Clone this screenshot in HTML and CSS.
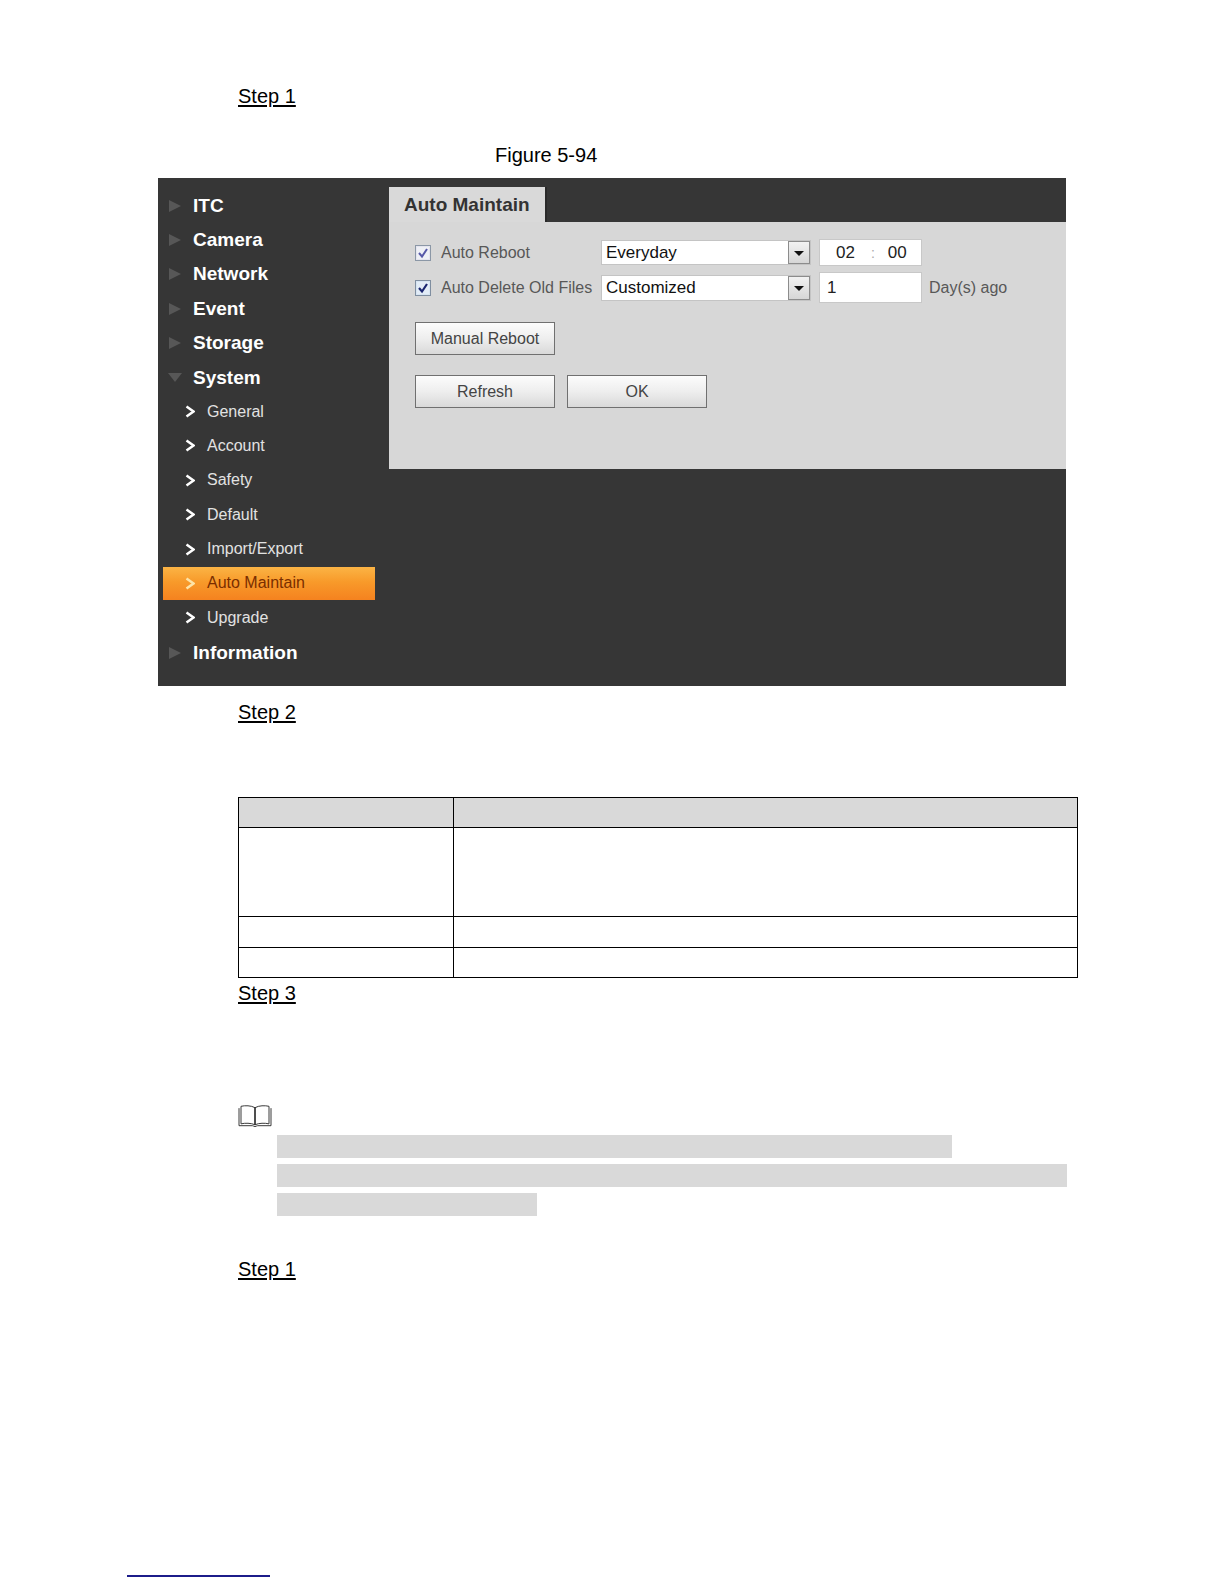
FILE: index.html
```html
<!DOCTYPE html>
<html>
<head>
<meta charset="utf-8">
<link rel="stylesheet" href="styles.css">
</head>
<body>
<div class="page">
  <p class="step">Step 1</p>
  <p class="caption">Figure 5-94</p>

  <div class="figure">
    <ul class="sidebar">
      <li class="top"><span class="tri"></span>ITC</li>
      <li class="top"><span class="tri"></span>Camera</li>
      <li class="top"><span class="tri"></span>Network</li>
      <li class="top"><span class="tri"></span>Event</li>
      <li class="top"><span class="tri"></span>Storage</li>
      <li class="top"><span class="tri down"></span>System</li>
      <li class="sub"><svg class="chev" viewBox="0 0 10 13"><polyline points="1.5,1.5 8.5,6.5 1.5,11.5"/></svg>General</li>
      <li class="sub"><svg class="chev" viewBox="0 0 10 13"><polyline points="1.5,1.5 8.5,6.5 1.5,11.5"/></svg>Account</li>
      <li class="sub"><svg class="chev" viewBox="0 0 10 13"><polyline points="1.5,1.5 8.5,6.5 1.5,11.5"/></svg>Safety</li>
      <li class="sub"><svg class="chev" viewBox="0 0 10 13"><polyline points="1.5,1.5 8.5,6.5 1.5,11.5"/></svg>Default</li>
      <li class="sub"><svg class="chev" viewBox="0 0 10 13"><polyline points="1.5,1.5 8.5,6.5 1.5,11.5"/></svg>Import/Export</li>
      <li class="sub active"><svg class="chev" viewBox="0 0 10 13"><polyline points="1.5,1.5 8.5,6.5 1.5,11.5"/></svg>Auto Maintain</li>
      <li class="sub"><svg class="chev" viewBox="0 0 10 13"><polyline points="1.5,1.5 8.5,6.5 1.5,11.5"/></svg>Upgrade</li>
      <li class="top"><span class="tri"></span>Information</li>
    </ul>

    <div class="main">
      <div class="tabbar"><div class="tab">Auto Maintain</div></div>
      <div class="panel">
        <div class="row row1">
          <svg class="cb" viewBox="0 0 16 16"><rect x="0.5" y="0.5" width="15" height="15" fill="#e4e4ee" stroke="#8b97a6"/><rect x="2" y="2" width="12" height="12" fill="#eef0f6"/><polyline points="4,8 7,11.5 12,4" fill="none" stroke="#5658a8" stroke-width="2"/></svg>
          <span class="label">Auto Reboot</span>
          <div class="select"><span class="val">Everyday</span><span class="arrow"></span></div>
          <div class="timebox"><span>02</span><span class="colon">:</span><span>00</span></div>
        </div>
        <div class="row row2">
          <svg class="cb" viewBox="0 0 16 16"><rect x="0.5" y="0.5" width="15" height="15" fill="#d6e4f2" stroke="#7f8ea0"/><rect x="2" y="2" width="12" height="12" fill="#e2ecf7"/><polyline points="4,8 7,11.5 12,4" fill="none" stroke="#1a2670" stroke-width="2.2"/></svg>
          <span class="label">Auto Delete Old Files</span>
          <div class="select"><span class="val">Customized</span><span class="arrow"></span></div>
          <div class="inputbox">1</div>
          <span class="unit">Day(s) ago</span>
        </div>
        <div class="btnrow first"><button class="btn">Manual Reboot</button></div>
        <div class="btnrow"><button class="btn">Refresh</button><button class="btn">OK</button></div>
      </div>
    </div>
  </div>

  <p class="step step2">Step 2</p>

  <table class="params">
    <tr class="head"><td class="c1"></td><td></td></tr>
    <tr class="tall"><td class="c1"></td><td></td></tr>
    <tr class="r3"><td class="c1"></td><td></td></tr>
    <tr class="r4"><td class="c1"></td><td></td></tr>
  </table>

  <p class="step step3">Step 3</p>

  <div class="note">
    <svg class="book" viewBox="0 0 34 26" preserveAspectRatio="none">
      <path d="M17 4 C13 1.5 7 1.5 3 2.5 V21.5 C7 20.5 13 20.5 17 22.5 Z" fill="none" stroke="#333" stroke-width="1"/>
      <path d="M17 4 C21 1.5 27 1.5 31 2.5 V21.5 C27 20.5 21 20.5 17 22.5 Z" fill="none" stroke="#333" stroke-width="1"/>
      <path d="M1 4.5 V23.5 H14.5 C15.5 23.5 16 24.5 17 24.5 C18 24.5 18.5 23.5 19.5 23.5 H33 V4.5" fill="none" stroke="#333" stroke-width="1"/>
      <path d="M17 4 V22.5" stroke="#333" stroke-width="1"/>
    </svg>
    <div class="bar b1"></div>
    <div class="bar b2"></div>
    <div class="bar b3"></div>
  </div>

  <p class="step step4">Step 1</p>

  <div class="footline"></div>
</div>
</body>
</html>
```
FILE: styles.css
```css
* { box-sizing: border-box; }

html, body {
  overflow: hidden;
}

body {
  margin: 0;
  background: #fff;
  font-family: "Liberation Sans", Arial, sans-serif;
  color: #000;
}

.page {
  width: 1224px;
  height: 1584px;
  overflow: hidden;
  padding-top: 84px;
}

.step {
  margin: 0 0 0 238px;
  font-size: 20px;
  line-height: 24px;
  text-decoration: underline;
  text-underline-offset: 2px;
}

.caption {
  margin: 35px 0 0 495px;
  font-size: 20px;
  line-height: 24px;
}

/* ---------- figure ---------- */
.figure {
  margin: 11px 0 0 158px;
  width: 908px;
  height: 508px;
  background: #363636;
  display: flex;
}

.sidebar {
  list-style: none;
  margin: 0;
  padding: 10px 0 0 0;
  width: 231px;
  flex: none;
}

.sidebar li {
  height: 34.4px;
  display: flex;
  align-items: center;
}

.top {
  padding-left: 11px;
  color: #fff;
  font-weight: bold;
  font-size: 19px;
  padding-top: 1px;
}

.tri {
  width: 0;
  height: 0;
  border-top: 6.5px solid transparent;
  border-bottom: 6.5px solid transparent;
  border-left: 12px solid #575757;
  margin-right: 12px;
}

.tri.down {
  border-left: 7px solid transparent;
  border-right: 7px solid transparent;
  border-top: 9px solid #575757;
  border-bottom: 0;
  margin-left: -1px;
  margin-right: 11px;
}

.sub {
  margin-left: 5px;
  width: 212px;
  padding-left: 22px;
  color: #e2e2e2;
  font-size: 16px;
}

.chev {
  width: 10px;
  height: 13px;
  margin-right: 12px;
  fill: none;
  stroke: #fff;
  stroke-width: 2.5;
}

.sidebar li.active {
  height: 32.4px;
  margin-top: 1px;
  margin-bottom: 1px;
  background: linear-gradient(#fbb445 0%, #f89a2a 45%, #f5821f 100%);
  color: #7a2e00;
}

.active .chev { stroke: #fde4a8; }

.main {
  flex: 1;
  display: flex;
  flex-direction: column;
}

.tabbar {
  height: 44px;
  padding-top: 9px;
}

.tab {
  width: 158px;
  height: 35px;
  background: #d9d9d9;
  border-right: 2px solid #2a2a2a;
  color: #333;
  font-weight: bold;
  font-size: 19px;
  padding-left: 15px;
  display: flex;
  align-items: center;
}

.panel {
  height: 247px;
  background: #d7d7d7;
  padding: 17px 0 0 26px;
}

.row {
  display: flex;
  align-items: center;
  font-size: 16px;
  color: #585858;
}

.row1 { height: 27px; }
.row2 { height: 31px; margin-top: 6px; }

.cb {
  width: 16px;
  height: 16px;
  margin-right: 10px;
  flex: none;
}

.label {
  width: 160px;
  white-space: nowrap;
}

.select {
  width: 210px;
  height: 26px;
  background: #fff;
  border: 1px solid #c4c4c4;
  display: flex;
  align-items: center;
  justify-content: space-between;
  padding-left: 4px;
}

.row1 .select { height: 25px; }

.val {
  font-size: 17px;
  color: #111;
}

.arrow {
  width: 22px;
  height: 100%;
  border: 1px solid #8c8c8c;
  background: linear-gradient(#f2f2f2, #d6d6d6);
  position: relative;
}

.arrow::after {
  content: "";
  position: absolute;
  left: 5px;
  top: 9px;
  border-left: 5px solid transparent;
  border-right: 5px solid transparent;
  border-top: 5px solid #111;
}

.timebox {
  margin-left: 8px;
  width: 103px;
  height: 27px;
  background: #fff;
  border: 1px solid #c8c8c8;
  display: flex;
  align-items: center;
  padding-left: 16px;
  font-size: 17px;
  color: #222;
}

.colon {
  color: #aaa;
  margin: 0 13px 0 16px;
  font-size: 14px;
}

.inputbox {
  margin-left: 8px;
  width: 103px;
  height: 31px;
  background: #fff;
  border: 1px solid #c8c8c8;
  display: flex;
  align-items: center;
  padding-left: 7px;
  font-size: 17px;
  color: #222;
}

.unit {
  margin-left: 7px;
}

.btnrow {
  display: flex;
  gap: 12px;
  margin-top: 20px;
}

.btnrow.first { margin-top: 19px; }

.btn {
  width: 140px;
  height: 33px;
  border: 1px solid #707070;
  background: linear-gradient(#fcfcfc 0%, #eeeeee 50%, #d9d9d9 100%);
  font-family: "Liberation Sans", Arial, sans-serif;
  font-size: 16px;
  color: #444;
  padding: 0;
}

/* ---------- table ---------- */
.step2 { margin-top: 14px; }

.params {
  margin: 73px 0 0 238px;
  width: 840px;
  border-collapse: collapse;
}

.params td {
  border: 1px solid #000;
  padding: 0;
}

.params .c1 { width: 215px; }
.params .head td { background: #d9d9d9; height: 30px; }
.params .tall td { height: 89px; }
.params .r3 td { height: 31px; }
.params .r4 td { height: 30px; }

.step3 { margin-top: 3px; }

/* ---------- note ---------- */
.note {
  margin-top: 99px;
}

.book {
  display: block;
  margin-left: 238px;
  width: 34px;
  height: 24px;
}

.bar {
  margin-left: 277px;
  height: 23px;
  background: #d9d9d9;
}

.b1 { width: 675px; margin-top: 7px; }
.b2 { width: 790px; margin-top: 6px; }
.b3 { width: 260px; margin-top: 6px; }

.step4 { margin-top: 41px; }

.footline {
  margin: 294px 0 0 127px;
  width: 143px;
  height: 2px;
  background: #1c1c8a;
}
```
